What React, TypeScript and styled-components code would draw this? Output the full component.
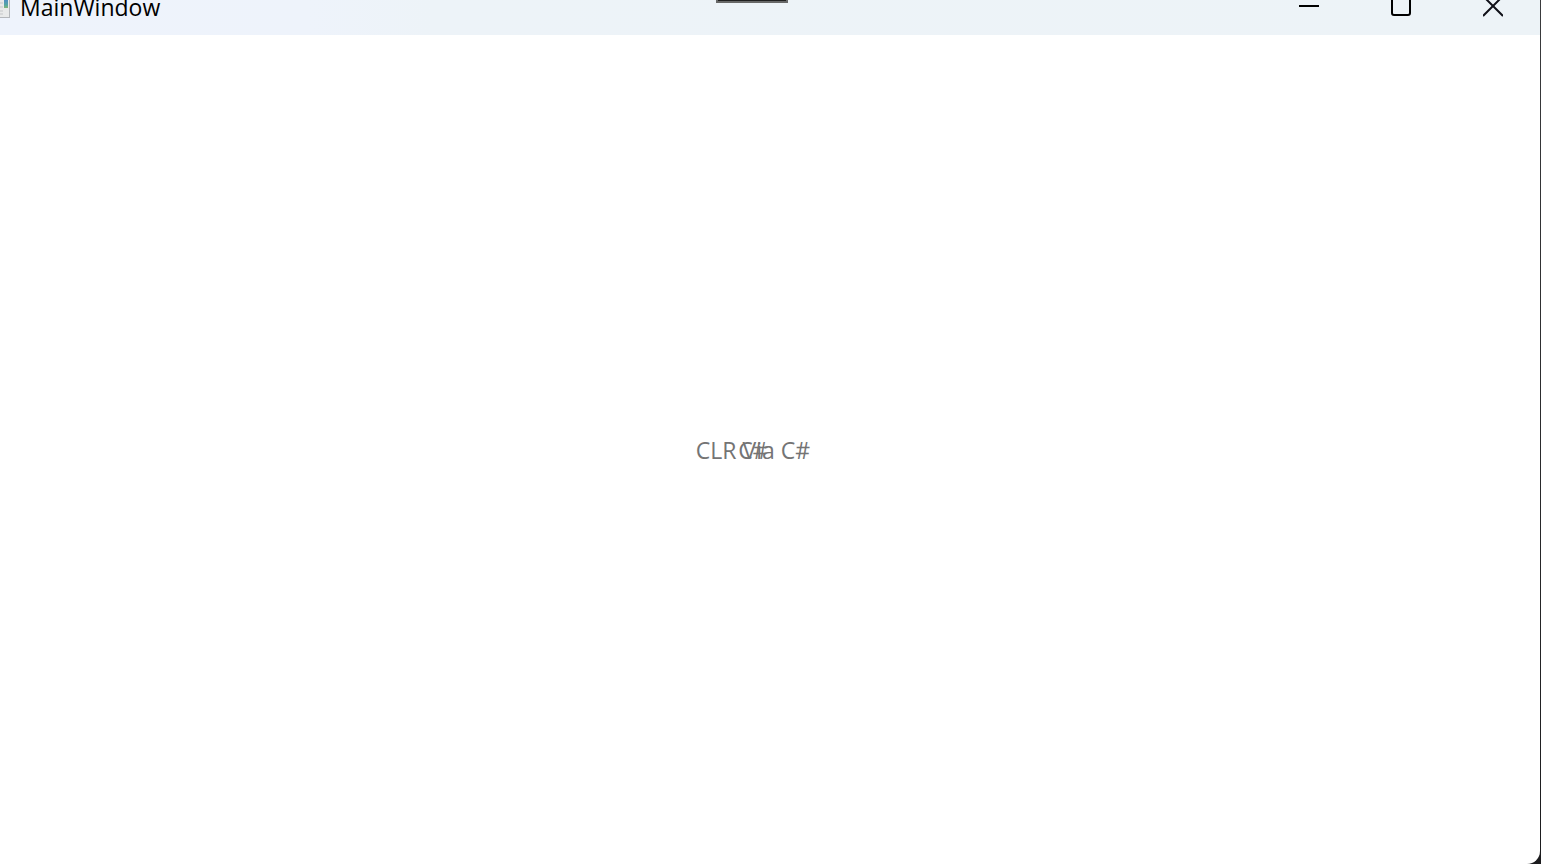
import React from "react";
import styled, { createGlobalStyle } from "styled-components";

const GlobalStyle = createGlobalStyle`
  * { box-sizing: border-box; }
  body { margin: 0; background: #1c1c1e; }
`;

const Desktop = styled.div`
  padding-right: 1px;
  background: linear-gradient(#3a3b3d, #1c1c1e);
`;

const Window = styled.main`
  display: flex;
  flex-direction: column;
  min-height: 100vh;
  overflow: hidden;
  border-bottom-right-radius: 13px;
  background: #ffffff;
  font-family: "Open Sans", "Noto Sans", sans-serif;
`;

const TitleBar = styled.header`
  display: grid;
  grid-template-columns: 1fr auto 1fr;
  align-items: start;
  height: 35px;
  background: linear-gradient(90deg, #eef3fc, #eef3fb 20%, #edf3f8 28%, #edf3f7);
`;

const Caption = styled.div`
  display: flex;
  gap: 8px;
`;

const Title = styled.h1`
  margin: 0;
  color: #000000;
  font-size: 23px;
  font-weight: 400;
  line-height: 14px;
`;

const DebugHandle = styled.div`
  width: 72px;
  height: 3px;
  margin-right: 36px;
  border: solid #686868;
  border-width: 0 2px 2px;
  background: #202020;
`;

const WindowControls = styled.div`
  display: flex;
  justify-content: flex-end;
  padding-right: 1px;
`;

const ControlButton = styled.button`
  display: flex;
  justify-content: center;
  width: 92px;
  height: 35px;
  padding: 0;
  border: 0;
  background: transparent;
  color: #000000;
`;

const Content = styled.section`
  display: grid;
  flex: 1;
  place-items: center;
  padding-right: 34px;
`;

const Label = styled.span`
  grid-area: 1 / 1;
  color: #747474;
  font-size: 23px;
  line-height: 32px;
  white-space: nowrap;
`;

const AppIcon = () => (
  <svg width="12" height="20" viewBox="0 0 12 20" aria-hidden="true">
    <defs>
      <linearGradient id="chart" x1="0" y1="0" x2="0" y2="1">
        <stop offset="0" stopColor="#4f8fc2" />
        <stop offset="0.6" stopColor="#55a6a6" />
        <stop offset="1" stopColor="#83b875" />
      </linearGradient>
    </defs>
    <path d="M0 0H10V18H0Z" fill="#e9eaea" />
    <path d="M9 0H10V18H0V17H9Z" fill="#b4b7bb" />
    <path d="M4 0H8V8H4Z" fill="url(#chart)" />
    <path d="M0 3H3M0 7H3M0 11H3M0 14H3" stroke="#c5c7c9" />
  </svg>
);

export default function App() {
  return (
    <Desktop>
      <GlobalStyle />
      <Window>
        <TitleBar>
          <Caption>
            <AppIcon />
            <Title>MainWindow</Title>
          </Caption>
          <DebugHandle />
          <WindowControls>
            <ControlButton type="button" aria-label="Minimize">
              <svg width="20" height="17" aria-hidden="true">
                <path d="M0 6H20" stroke="currentColor" strokeWidth="2" />
              </svg>
            </ControlButton>
            <ControlButton type="button" aria-label="Maximize">
              <svg width="20" height="17" aria-hidden="true">
                <rect x="1" y="-4" width="18" height="19" rx="2" fill="none" stroke="currentColor" strokeWidth="2" />
              </svg>
            </ControlButton>
            <ControlButton type="button" aria-label="Close">
              <svg width="20" height="17" aria-hidden="true">
                <path d="M0 -4L20 16M20 -4L0 16" stroke="#101018" strokeWidth="2" />
              </svg>
            </ControlButton>
          </WindowControls>
        </TitleBar>
        <Content>
          <Label>C#</Label>
          <Label>CLR Via C#</Label>
        </Content>
      </Window>
    </Desktop>
  );
}
